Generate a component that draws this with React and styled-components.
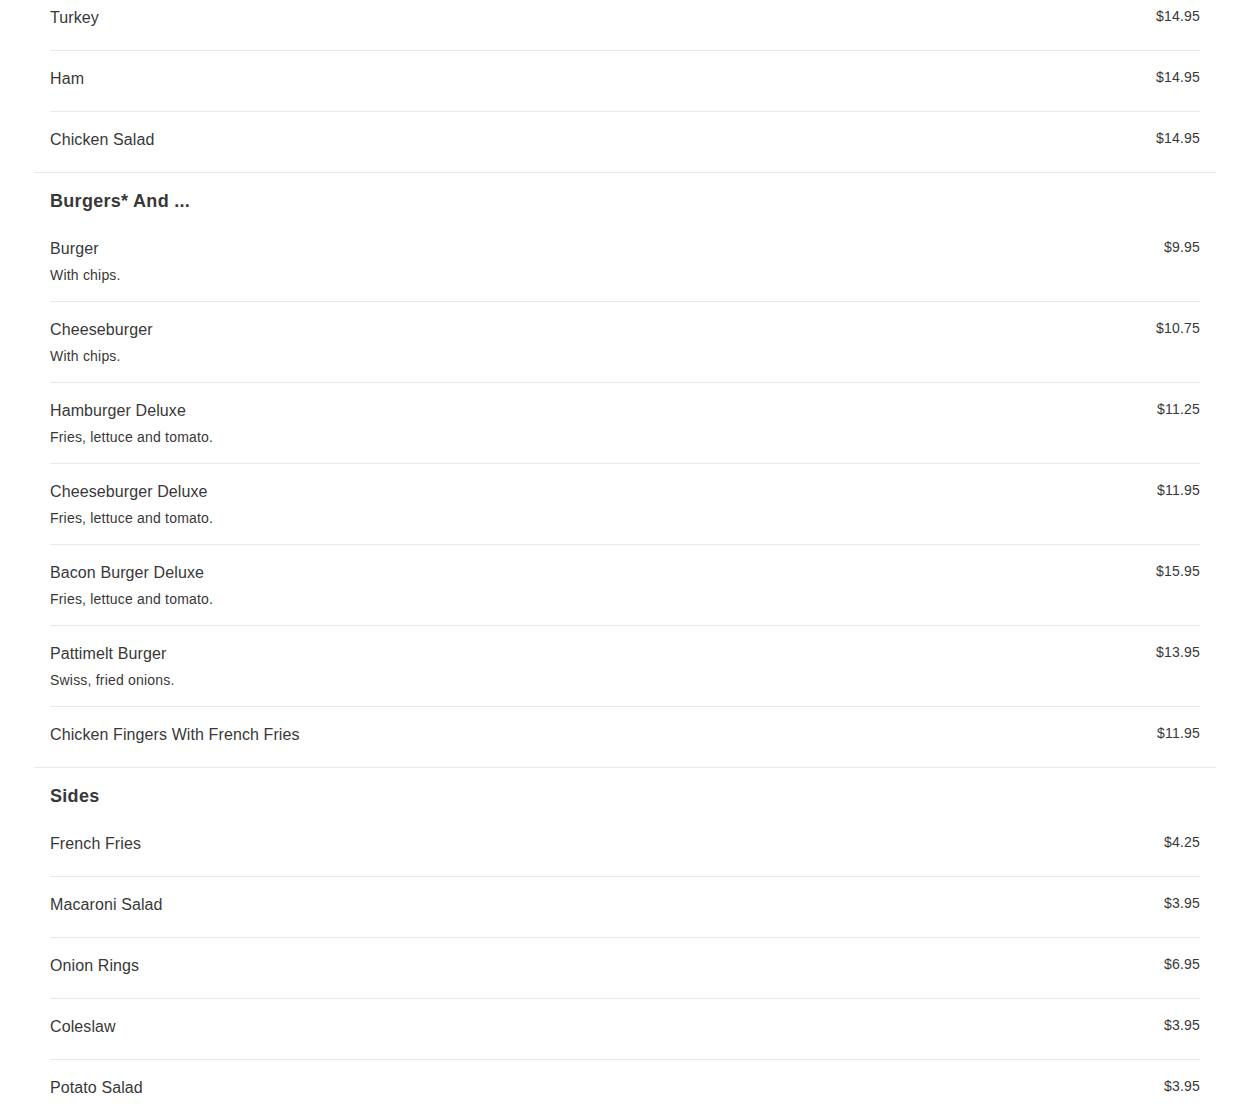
import styled, { createGlobalStyle } from "styled-components";

const GlobalStyle = createGlobalStyle`
    body {
        margin: 0;
        background: #fff;
        font-family: "Liberation Sans", Arial, sans-serif;
        color: #383838;
    }
`

const MenuWrap = styled.div`
    margin: -10px 34px 0;
`

const Section = styled.section`
    padding: 0 16px;
    border-bottom: 1px solid #e8e8e8;
`

const SectionTitle = styled.h2`
    margin: 0;
    padding: 16px 0 8px;
    font-size: 18px;
    line-height: 24px;
    font-weight: bold;
    letter-spacing: 0.3px;
    color: #383838;
`

const ItemList = styled.ul`
    list-style: none;
    margin: 0;
    padding: 0;
`

const Item = styled.li`
    display: flex;
    justify-content: space-between;
    align-items: flex-start;
    padding: 18px 0 16px;

    &:not(:last-child) {
        border-bottom: 1px solid #e8e8e8;
    }
`

const ItemText = styled.div`
    display: flex;
    flex-direction: column;
    gap: 6px;
    min-height: 26px;
`

const ItemName = styled.span`
    font-size: 16px;
    line-height: 20px;
    letter-spacing: 0.1px;
    color: #383838;
`

const ItemDesc = styled.span`
    font-size: 14px;
    line-height: 20px;
    letter-spacing: 0.2px;
    color: #383838;
`

const ItemPrice = styled.span`
    font-size: 14px;
    line-height: 16px;
    letter-spacing: 0.2px;
    color: #383838;
`

const menu = [
    {
        title: null,
        items: [
            { name: "Turkey", price: "$14.95" },
            { name: "Ham", price: "$14.95" },
            { name: "Chicken Salad", price: "$14.95" },
        ],
    },
    {
        title: "Burgers* And ...",
        items: [
            { name: "Burger", desc: "With chips.", price: "$9.95" },
            { name: "Cheeseburger", desc: "With chips.", price: "$10.75" },
            { name: "Hamburger Deluxe", desc: "Fries, lettuce and tomato.", price: "$11.25" },
            { name: "Cheeseburger Deluxe", desc: "Fries, lettuce and tomato.", price: "$11.95" },
            { name: "Bacon Burger Deluxe", desc: "Fries, lettuce and tomato.", price: "$15.95" },
            { name: "Pattimelt Burger", desc: "Swiss, fried onions.", price: "$13.95" },
            { name: "Chicken Fingers With French Fries", price: "$11.95" },
        ],
    },
    {
        title: "Sides",
        items: [
            { name: "French Fries", price: "$4.25" },
            { name: "Macaroni Salad", price: "$3.95" },
            { name: "Onion Rings", price: "$6.95" },
            { name: "Coleslaw", price: "$3.95" },
            { name: "Potato Salad", price: "$3.95" },
        ],
    },
]

export default function App() {
    return (
        <>
            <GlobalStyle />
            <MenuWrap>
                {menu.map((section, i) => (
                    <Section key={i}>
                        {section.title && <SectionTitle>{section.title}</SectionTitle>}
                        <ItemList>
                            {section.items.map(item => (
                                <Item key={item.name}>
                                    <ItemText>
                                        <ItemName>{item.name}</ItemName>
                                        {item.desc && <ItemDesc>{item.desc}</ItemDesc>}
                                    </ItemText>
                                    <ItemPrice>{item.price}</ItemPrice>
                                </Item>
                            ))}
                        </ItemList>
                    </Section>
                ))}
            </MenuWrap>
        </>
    )
}
